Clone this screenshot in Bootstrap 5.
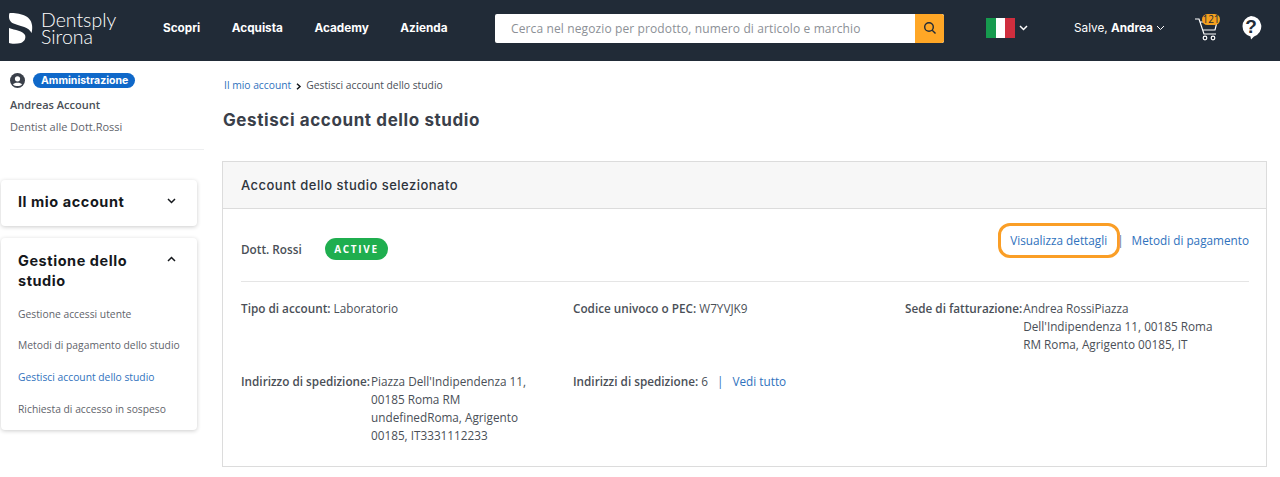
<!DOCTYPE html>
<html lang="it"><head><meta charset="utf-8"><title>Gestisci account dello studio</title>
<link rel="stylesheet" href="https://cdn.jsdelivr.net/npm/bootstrap@5.3.0/dist/css/bootstrap.min.css">
<style>
html,body{height:477px;overflow:hidden}
body{font-family:"Open Sans","Noto Sans",sans-serif;font-size:11.75px;color:#4a4f57;background:#fff}
a{text-decoration:none;color:#2f72bd}
.topbar{height:61px;background:#212b37;color:#fff;padding:0 0 5px 9px}
.logo-mark{width:24px;height:31px}
.logo-words{font-family:"Lato",sans-serif;font-size:19.5px;line-height:17px;font-weight:300;margin-left:8px;width:108px}
.menu-main{gap:31.5px;width:286px;margin-left:14px;padding-top:1px;font-family:"Inter",sans-serif;font-weight:700;font-size:11.75px}
.searchbox{width:449px;height:29px;margin-left:46px;border-radius:2px;overflow:hidden;background:#fff}
.searchbox span{flex:1;padding-left:16px;font-size:12px;color:#8c9096;letter-spacing:.12px;line-height:29px}
.searchbtn{width:29px;height:29px;background:#ffa726;border-radius:0 2px 2px 0}
.flag{width:29px;height:20px;margin-left:42px}
.flag i{flex:1}
.hello{margin-left:46px;padding-top:1px;font-size:11.75px;font-family:"Inter",sans-serif;width:108px;white-space:nowrap;font-weight:400}
.hello b{font-weight:700}
.cartwrap{width:30px;height:30px;margin-left:13px}
.cartcount{position:absolute;left:7px;top:1px;width:18px;height:11px;border-radius:7px;background:#f5a01e;color:#212b37;font-size:10px;line-height:11px;text-align:center}
.helpmark{margin:0 0 2px 15px}
.sidepane{width:204px;flex:none;padding-top:10px}
.rolebar{padding-left:10px;gap:8px;height:18px}
.rolepill{background:#0f68c9;color:#fff;font-family:"Inter",sans-serif;font-weight:700;font-size:10.5px;line-height:15px;border-radius:8px;padding:0 8px;width:102px;white-space:nowrap}
.who{padding-left:10px;margin-top:8px;font-size:11px;line-height:16px;font-weight:600}
.where{padding-left:10px;margin-top:6px;font-size:11px;line-height:16px;color:#5f646b}
.sideline{margin:14px 0 30px 10px;border-top:1px solid #eeeff0}
.sidecard{margin-left:1px;width:196px;border-radius:4px;background:#fff;box-shadow:0 1px 4px rgba(0,0,0,.2);padding:0 21px 0 17px}
.sidecard h2{font-family:"Inter",sans-serif;font-weight:700;font-size:14.5px;line-height:20px;color:#15181c;margin:0;letter-spacing:.55px}
.acc-one{height:46px;margin-bottom:12px;padding-top:12px}
.acc-one svg{margin-top:6px}
.acc-two{padding-top:13px;height:192px}
.acc-two svg{margin-top:5px}
.sidelinks{margin-top:14.5px}
.sidelinks a{display:block;font-size:10.3px;line-height:16px;color:#5f646b;margin-bottom:15.7px;white-space:nowrap}
.sidelinks a.on{color:#2f72bd}
.mainpane{width:1045px;margin-left:18px;flex:none}
.crumbs{margin-top:16px;font-size:10.3px;line-height:16px;height:16px;padding-left:2px}
.crumbs svg{margin:0 4px 0 5px}
.pagetitle{font-family:"Inter",sans-serif;font-weight:700;font-size:17px;line-height:24px;margin:15px 0 29px 1px;color:#3a404a;letter-spacing:.6px}
.acctcard{height:306px;border:1px solid #dcdcdc;border-radius:0;color:#4a4f57}
.acctcard .card-header{height:47px;padding:0 18px;line-height:46px;background:#f7f7f7;border-bottom:1px solid #dcdcdc;border-radius:0;font-family:"Inter",sans-serif;font-size:13px;font-weight:500;color:#2e343c;letter-spacing:.47px}
.acctbody{padding:0 17px 0 18px}
.toprow{height:73px;border-bottom:1px solid #e5e5e5;position:relative}
.studioname{font-size:11.75px;font-weight:600;color:#4a4f57;width:84px;margin-top:31px;line-height:18px}
.activepill{margin-top:29px;height:22px;width:63px;line-height:22px;border-radius:11px;background:#1fae4f;color:#fff;font-size:10px;font-weight:700;letter-spacing:1.7px;text-align:center}
.linkset{position:absolute;right:0;top:22px;font-size:11.75px;line-height:18px}
.ringed{display:inline-block;border:3px solid #fa9e26;border-radius:12px;padding:4px 10px 4px 9px;line-height:20px;height:35px;margin-top:-8px}
.linkset .sep{margin:0 8px 0 -3px;color:#55789e}
.factgrid{display:grid;grid-template-columns:332px 332px 1fr;grid-template-rows:73px 1fr;font-size:11.75px;line-height:18px;padding-top:17px}
.factgrid b{font-weight:600}
.fact{display:flex;align-items:flex-start}
.fact b{flex:none;margin-right:1px}
.fact-addr{width:165px;display:block}
.fact-bill{width:195px}
.barsep{margin:0 6px}
</style></head><body>
<header class="topbar d-flex align-items-center">
  <svg class="logo-mark" viewBox="0 0 24 31" fill="#fff"><path d="M1 0C10 0 22 2 23 12C23.500 15 23 19 22.500 20C20 14 11 13 6 11C2 10 0 7 0 4C0 2 0 0 1 0Z"/><path d="M0 15C6 17 14 18 16 22C17 25 16 28 12 30C8 31 2 31 0 30Z"/></svg>
  <div class="logo-words">Dentsply<br>Sirona</div>
  <nav class="menu-main d-flex"><span>Scopri</span><span>Acquista</span><span>Academy</span><span>Azienda</span></nav>
  <div class="searchbox d-flex"><span>Cerca nel negozio per prodotto, numero di articolo e marchio</span>
    <div class="searchbtn d-flex align-items-center justify-content-center"><svg width="14" height="14" viewBox="0 0 14 14" fill="none" stroke="#212b37" stroke-width="1.400"><circle cx="6" cy="6" r="4.300"/><path d="M9.200 9.200 12.500 12.500"/></svg></div></div>
  <div class="flag d-flex"><i style="background:#169a4e"></i><i style="background:#fff"></i><i style="background:#cf2e3e"></i></div>
  <svg class="ms-1" width="9" height="6" viewBox="0 0 9 6" fill="none" stroke="#fff" stroke-width="1.500"><path d="M1 1 4.500 4.500 8 1"/></svg>
  <div class="hello">Salve, <b>Andrea</b> <svg width="9" height="6" viewBox="0 0 9 6" fill="none" stroke="#fff" stroke-width="1"><path d="M1 1 4.500 4.500 8 1"/></svg></div>
  <div class="cartwrap position-relative"><svg width="24" height="26" viewBox="0 0 24 26" fill="none" stroke="#fff" stroke-width="1.200" style="margin-top:3px"><path d="M0 3H4L9 18H21M5 6H22L20 14H7.500"/><circle cx="10" cy="22" r="1.800"/><circle cx="18" cy="22" r="1.800"/></svg><span class="cartcount">121</span></div>
  <svg class="helpmark" width="22" height="25" viewBox="0 0 22 25"><path fill="#fff" d="M11 1a10.500 10.500 0 0 1 3 20.500L11 24.500 10.500 21.500A10.500 10.500 0 0 1 11 1Z"/><text x="11" y="18" text-anchor="middle" font-family="Liberation Sans" font-weight="700" font-size="19" fill="#212b37">?</text></svg>
</header>
<div class="d-flex">
  <aside class="sidepane">
    <div class="rolebar d-flex align-items-center"><svg width="15" height="15" viewBox="0 0 15 15"><circle cx="7.500" cy="7.500" r="7.500" fill="#3a404a"/><circle cx="7.500" cy="5.800" r="2.600" fill="#fff"/><path fill="#fff" d="M3 11.500C4 9.300 11 9.300 12 11.500 10 13.500 5 13.500 3 11.500Z"/></svg><span class="rolepill">Amministrazione</span></div>
    <div class="who">Andreas Account</div>
    <div class="where">Dentist alle Dott.Rossi</div>
    <div class="sideline"></div>
    <section class="sidecard acc-one d-flex justify-content-between"><h2>Il mio account</h2><svg width="9" height="6" viewBox="0 0 9 6" fill="none" stroke="#15181c" stroke-width="1.500"><path d="M1 1 4.500 4.500 8 1"/></svg></section>
    <section class="sidecard acc-two">
      <div class="d-flex justify-content-between"><h2>Gestione dello<br>studio</h2><svg width="9" height="6" viewBox="0 0 9 6" fill="none" stroke="#15181c" stroke-width="1.500"><path d="M1 5 4.500 1.500 8 5"/></svg></div>
      <div class="sidelinks"><a href="#">Gestione accessi utente</a><a href="#">Metodi di pagamento dello studio</a><a href="#" class="on">Gestisci account dello studio</a><a href="#">Richiesta di accesso in sospeso</a></div>
    </section>
  </aside>
  <main class="mainpane">
    <div class="crumbs"><a href="#">Il mio account</a><svg width="6" height="7" viewBox="0 0 6 7" fill="none" stroke="#15181c" stroke-width="1.500"><path d="M1 .8 4 3.500 1 6.200"/></svg>Gestisci account dello studio</div>
    <h1 class="pagetitle">Gestisci account dello studio</h1>
    <div class="card acctcard">
      <div class="card-header">Account dello studio selezionato</div>
      <div class="acctbody">
        <div class="toprow d-flex"><div class="studioname">Dott. Rossi</div><div class="activepill">ACTIVE</div>
          <div class="linkset"><a href="#" class="ringed">Visualizza dettagli</a><span class="sep">|</span><a href="#">Metodi di pagamento</a></div></div>
        <div class="factgrid">
          <div><b>Tipo di account:</b> Laboratorio</div>
          <div><b>Codice univoco o PEC:</b> W7YVJK9</div>
          <div class="fact"><b>Sede di fatturazione:</b><span class="fact-bill">Andrea RossiPiazza Dell'Indipendenza 11, 00185 Roma RM Roma, Agrigento 00185, IT</span></div>
          <div class="fact"><b>Indirizzo di spedizione:</b><span class="fact-addr">Piazza Dell'Indipendenza 11, 00185 Roma RM undefinedRoma, Agrigento 00185, IT3331112233</span></div>
          <div><b>Indirizzi di spedizione:</b> 6 <a href="#" class="barsep">|</a> <a href="#">Vedi tutto</a></div>
        </div>
      </div>
    </div>
  </main>
</div>
<script src="https://cdn.jsdelivr.net/npm/bootstrap@5.3.0/dist/js/bootstrap.bundle.min.js"></script>
</body></html>
